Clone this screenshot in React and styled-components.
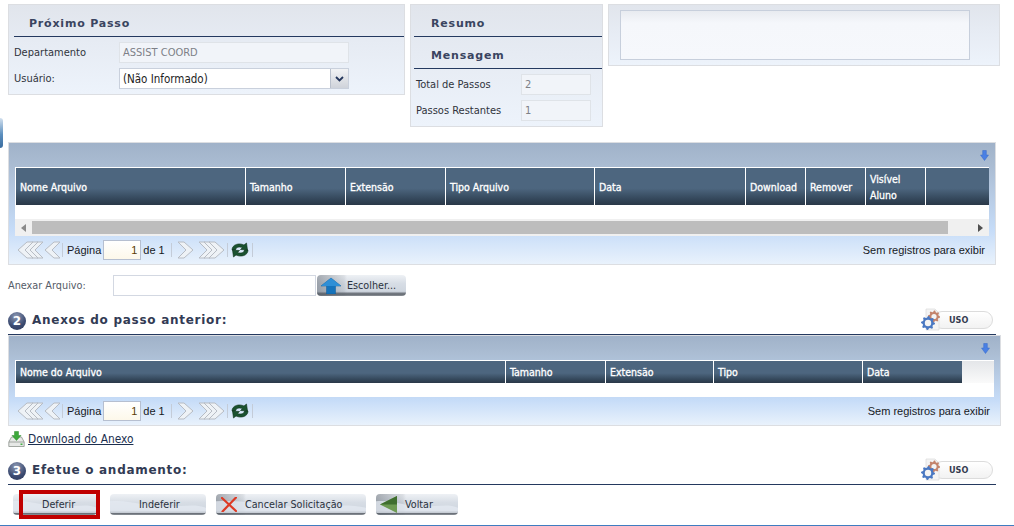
import React from "react";
import styled, { createGlobalStyle } from "styled-components";

const GlobalStyle = createGlobalStyle`
  html, body {
    margin: 0;
    padding: 0;
    background: #ffffff;
    overflow: hidden;
  }
  body {
    font-family: "DejaVu Sans Condensed", "DejaVu Sans", sans-serif;
    font-stretch: condensed;
    font-size: 11px;
    color: #2b2f38;
  }
`;

const FIRST_COLUMNS = [
  { label: "Nome Arquivo", width: 230 },
  { label: "Tamanho", width: 100 },
  { label: "Extensão", width: 100 },
  { label: "Tipo Arquivo", width: 149 },
  { label: "Data", width: 151 },
  { label: "Download", width: 60 },
  { label: "Remover", width: 60 },
  { label: "Visível Aluno", width: 60 },
  { label: "", width: 63 },
];

const SECOND_COLUMNS = [
  { label: "Nome do Arquivo", width: 490 },
  { label: "Tamanho", width: 100 },
  { label: "Extensão", width: 108 },
  { label: "Tipo", width: 149 },
  { label: "Data", width: 99 },
];

// gear outline, used for the USO badge
const gearPoints = (cx, cy, outer, inner, teeth) => {
  const points = [];
  for (let i = 0; i < teeth * 4; i++) {
    const r = i % 4 < 2 ? outer : inner;
    const a = (i / (teeth * 4)) * Math.PI * 2;
    points.push(`${(cx + r * Math.cos(a)).toFixed(2)},${(cy + r * Math.sin(a)).toFixed(2)}`);
  }
  return points.join(" ");
};

const Chevrons = ({ count, left }) => {
  const width = 15 + (count - 1) * 5 + 2;
  return (
    <svg width={width} height="18" viewBox={`0 0 ${width} 18`}>
      {Array.from({ length: count }).map((_, i) => {
        const order = left ? count - 1 - i : i;
        const x = order * 5 + 1;
        const d = left
          ? `M${x + 9} 1 L${x} 9 L${x + 9} 17 L${x + 15} 17 L${x + 7} 9 L${x + 15} 1 Z`
          : `M${x + 6} 1 L${x + 15} 9 L${x + 6} 17 L${x} 17 L${x + 8} 9 L${x} 1 Z`;
        return <path key={i} d={d} fill="#eef2f6" stroke="#b7bcc4" strokeWidth="1" />;
      })}
    </svg>
  );
};

const RefreshIcon = () => (
  <svg width="20" height="18" viewBox="0 0 20 18">
    <path d="M2 9 C2 3.5 9 1.5 14 4 L16.5 2 L17.5 9 L10.5 8.5 L12.5 6.6 C9 5.2 5.8 6.2 5.5 9 Z" fill="#1a5230" stroke="#0d3019" strokeWidth=".6" />
    <path d="M18 9 C18 14.5 11 16.5 6 14 L3.5 16 L2.5 9 L9.5 9.5 L7.5 11.4 C11 12.8 14.2 11.8 14.5 9 Z" fill="#1a5230" stroke="#0d3019" strokeWidth=".6" />
  </svg>
);

const SmallDownArrow = () => (
  <svg width="9" height="11" viewBox="0 0 9 11">
    <path d="M2.7 0.5 H6.3 V5 H8.5 L4.5 10.5 L0.5 5 H2.7 Z" fill="#4a80e4" stroke="#3568c8" strokeWidth=".5" />
  </svg>
);

const UploadIcon = () => (
  <svg width="22" height="17" viewBox="0 0 22 17">
    <path d="M11 1 L21 9 H15.5 V17 H6.5 V9 H1 Z" fill="#1673bb" stroke="#0f5c9a" strokeWidth=".5" />
    <path d="M11 1 L21 9 H1 Z" fill="#2f8fd6" />
  </svg>
);

const DownloadIcon = () => (
  <svg width="17" height="16" viewBox="0 0 17 16">
    <path d="M3.5 6 L0.8 11 V15.5 H16.2 V11 L13.5 6 Z" fill="#e6e8e6" stroke="#8d938d" strokeWidth=".8" />
    <path d="M1 11 H16" stroke="#8d938d" strokeWidth=".8" />
    <path d="M6.5 0.5 H10.5 V4.5 H13 L8.5 9.5 L4 4.5 H6.5 Z" fill="#3da83a" stroke="#2c8a2a" strokeWidth=".5" />
    <rect x="12.5" y="12.5" width="2" height="1.5" fill="#45b045" />
  </svg>
);

const GearIcon = () => (
  <svg width="24" height="24" viewBox="0 0 24 24">
    <path d="M6 1 H15 L19 5 V22 H6 Z" fill="#f4f4f4" stroke="#dadada" strokeWidth=".7" />
    <polygon points={gearPoints(14, 8.5, 6, 4.6, 8)} fill="#c4846c" />
    <circle cx="14" cy="8.5" r="2.6" fill="#f4f4f4" />
    <polygon points={gearPoints(8, 15, 7, 5.4, 8)} fill="#4a78c2" />
    <circle cx="8" cy="15" r="3.2" fill="#f4f4f4" />
  </svg>
);

const CrossIcon = () => (
  <svg width="16" height="15" viewBox="0 0 16 15">
    <path d="M1 1 L15 14 M15 0.5 L1.5 14.5" stroke="#dd3a24" strokeWidth="2.2" strokeLinecap="round" />
  </svg>
);

const BackIcon = () => (
  <svg width="17" height="17" viewBox="0 0 17 17">
    <path d="M0 8.5 L17 0 V17 Z" fill="#6d9a52" />
    <path d="M0 8.5 L17 0 V8.5 Z" fill="#3f6e2e" />
  </svg>
);

const ButtonWave = () => (
  <WaveArt viewBox="0 0 100 20" preserveAspectRatio="none">
    <path d="M0 7 C20 5 35 12 55 12 C75 12 88 9 100 13 V18 H0 Z" fill="#e4eaf1" opacity=".75" />
  </WaveArt>
);

const Pager = ({ message }) => (
  <PagerBar>
    <Chevrons count={3} left />
    <Chevrons count={1} left />
    <PagerSep $left="1px" />
    <PagerText>Página</PagerText>
    <PageBox>1</PageBox>
    <PagerText $after="4px">de 1</PagerText>
    <PagerSep $right="5px" />
    <NextButtons>
      <Chevrons count={1} />
      <Chevrons count={3} />
    </NextButtons>
    <PagerSep />
    <RefreshIcon />
    <PagerSep />
    <PagerInfo>{message}</PagerInfo>
  </PagerBar>
);

const SectionHeading = ({ number, title, $marginTop }) => (
  <SectionRow $marginTop={$marginTop}>
    <NumberBall>{number}</NumberBall>
    <SectionTitle>{title}</SectionTitle>
    <UsoToggle>
      <UsoIcon><GearIcon /></UsoIcon>
      <UsoLabel>USO</UsoLabel>
    </UsoToggle>
  </SectionRow>
);

const App = () => {
  return (
    <Page>
      <GlobalStyle />
      <SideTab />
      <TopRow>
        <NextStepPanel>
          <PanelTitle>Próximo Passo</PanelTitle>
          <FormRows>
            <FormRow>
              <FieldLabel $width="105px">Departamento</FieldLabel>
              <ReadOnlyField $width="230px">ASSIST COORD</ReadOnlyField>
            </FormRow>
            <FormRow>
              <FieldLabel $width="105px">Usuário:</FieldLabel>
              <SelectBox>
                <SelectValue>(Não Informado)</SelectValue>
                <SelectArrow>
                  <svg width="9" height="6" viewBox="0 0 9 6">
                    <path d="M1 1 L4.5 4.5 L8 1" fill="none" stroke="#25375c" strokeWidth="1.8" />
                  </svg>
                </SelectArrow>
              </SelectBox>
            </FormRow>
          </FormRows>
        </NextStepPanel>

        <SummaryPanel>
          <PanelTitle $indent="17px">Resumo</PanelTitle>
          <PanelTitle $indent="17px">Mensagem</PanelTitle>
          <FormRows $indent="2px">
            <FormRow>
              <FieldLabel $width="105px">Total de Passos</FieldLabel>
              <ReadOnlyField $width="70px">2</ReadOnlyField>
            </FormRow>
            <FormRow>
              <FieldLabel $width="105px">Passos Restantes</FieldLabel>
              <ReadOnlyField $width="70px">1</ReadOnlyField>
            </FormRow>
          </FormRows>
        </SummaryPanel>

        <MessagePanel>
          <MessageBox />
        </MessagePanel>
      </TopRow>

      <Grid $width="988px" $marginTop="15px">
        <GridTop><SmallDownArrow /></GridTop>
        <HeaderRow $height="37px">
          {FIRST_COLUMNS.map((col, i) => (
            <HeaderCell key={i} $width={col.width}>{col.label}</HeaderCell>
          ))}
        </HeaderRow>
        <EmptyBody $height="14px" />
        <ScrollTrack>
          <ScrollArrow>
            <svg width="5" height="8" viewBox="0 0 5 8"><path d="M5 0 V8 L0 4 Z" fill="#8a8a8a" /></svg>
          </ScrollArrow>
          <ScrollThumb />
          <ScrollArrow>
            <svg width="5" height="8" viewBox="0 0 5 8"><path d="M0 0 V8 L5 4 Z" fill="#505050" /></svg>
          </ScrollArrow>
        </ScrollTrack>
        <Pager message="Sem registros para exibir" />
      </Grid>

      <AttachRow>
        <AttachLabel>Anexar Arquivo:</AttachLabel>
        <FileInput />
        <ChooseButton $width="89px" $iconArea>
          <UploadIcon />
          <ChooseText>Escolher...</ChooseText>
        </ChooseButton>
      </AttachRow>

      <SectionHeading number="2" title="Anexos do passo anterior:" $marginTop="7px" />

      <Grid $width="993px" $marginTop="0">
        <GridTop $paddingRight="10px"><SmallDownArrow /></GridTop>
        <HeaderRow $height="22px" $right="32px">
          {SECOND_COLUMNS.map((col, i) => (
            <HeaderCell key={i} $width={col.width}>{col.label}</HeaderCell>
          ))}
        </HeaderRow>
        <EmptyBody $height="14px" />
        <Pager message="Sem registros para exibir" />
      </Grid>

      <DownloadLinkRow>
        <DownloadIcon />
        <DownloadLink>Download do Anexo</DownloadLink>
      </DownloadLinkRow>

      <SectionHeading number="3" title="Efetue o andamento:" $marginTop="6px" />

      <ActionRow>
        <MarkedAction>
          <ActionButton $width="84px" $padLeft="29px">
            <ButtonWave />
            <ButtonText>Deferir</ButtonText>
          </ActionButton>
          <RedMark />
        </MarkedAction>
        <ActionButton $width="96px" $padLeft="29px">
          <ButtonWave />
          <ButtonText>Indeferir</ButtonText>
        </ActionButton>
        <ActionButton $width="150px" $padLeft="5px" $iconArea>
          <ButtonWave />
          <CrossIcon />
          <ButtonText $before="8px">Cancelar Solicitação</ButtonText>
        </ActionButton>
        <ActionButton $width="82px" $padLeft="4px" $iconArea>
          <ButtonWave />
          <BackIcon />
          <ButtonText $before="8px">Voltar</ButtonText>
        </ActionButton>
      </ActionRow>
      <BottomLine />
    </Page>
  );
};

const Page = styled.div`
  position: relative;
  width: 1014px;
  height: 526px;
  display: flex;
  flex-direction: column;
  overflow: hidden;
  box-sizing: border-box;
  padding-left: 8px;
`;

const SideTab = styled.div`
  position: absolute;
  left: 0;
  top: 118px;
  width: 3px;
  height: 30px;
  background: linear-gradient(180deg, #d3e0ee, #5c8fbe 55%, #3a6c9f);
  border-radius: 0 3px 3px 0;
`;

const TopRow = styled.div`
  display: flex;
  align-items: flex-start;
  gap: 5px;
  padding-top: 4px;
  height: 123px;
`;

const Panel = styled.div`
  box-sizing: border-box;
  border: 1px solid #dcdee2;
  background: linear-gradient(180deg, #e1e5ec 0%, #e6ebf3 40%, #edf3fb 100%);
`;

const NextStepPanel = styled(Panel)`
  width: 397px;
  height: 91px;
  padding-left: 5px;
`;

const SummaryPanel = styled(Panel)`
  width: 193px;
  height: 123px;
  padding-left: 3px;
`;

const MessagePanel = styled(Panel)`
  width: 392px;
  height: 62px;
  padding: 5px 0 0 11px;
`;

const MessageBox = styled.div`
  box-sizing: border-box;
  width: 350px;
  height: 50px;
  border: 1px solid #c7cfdc;
  background: linear-gradient(180deg, #e8ebf0 0%, #f5f7fb 25%, #f6f8fc 100%);
`;

const PanelTitle = styled.div`
  box-sizing: border-box;
  height: 32px;
  padding: 6px 0 0 ${props => props.$indent || "15px"};
  border-bottom: 1px solid #24395f;
  display: flex;
  align-items: center;
  font-family: "DejaVu Sans", sans-serif;
  font-stretch: normal;
  font-size: 11px;
  font-weight: 700;
  letter-spacing: 0.8px;
  color: #3a4460;
`;

const FormRows = styled.div`
  display: flex;
  flex-direction: column;
  gap: 5px;
  padding: 5px 0 0 ${props => props.$indent || "0"};
`;

const FormRow = styled.div`
  display: flex;
  align-items: center;
  height: 21px;
`;

const FieldLabel = styled.div`
  width: ${props => props.$width};
  font-size: 11px;
  color: #30343c;
  flex-shrink: 0;
  margin-top: -1px;
`;

const ReadOnlyField = styled.div`
  box-sizing: border-box;
  width: ${props => props.$width};
  height: 21px;
  padding: 2px 3px;
  display: flex;
  align-items: center;
  border: 1px solid #dfe3e8;
  background: #f1f4f9;
  color: #7d8087;
  font-size: 11px;
`;

const SelectBox = styled.div`
  box-sizing: border-box;
  width: 230px;
  height: 21px;
  display: flex;
  border: 1px solid #c9d0dc;
  background: #ffffff;
`;

const SelectValue = styled.div`
  flex: 1;
  padding: 0 3px;
  display: flex;
  align-items: center;
  font-size: 11.5px;
  color: #1d1d1d;
`;

const SelectArrow = styled.div`
  width: 17px;
  display: flex;
  align-items: center;
  justify-content: center;
  background: linear-gradient(180deg, #f2f3f5, #cfd3da);
  border-left: 1px solid #b9c0cc;
`;

const Grid = styled.div`
  box-sizing: border-box;
  width: ${props => props.$width};
  margin-top: ${props => props.$marginTop};
  border: 1px solid #dcdee2;
  background: linear-gradient(180deg, #a0b2c9 0%, #aabcd2 18%, #c6dcf8 72%, #e9f2fc 100%);
`;

const GridTop = styled.div`
  height: 24px;
  padding-right: ${props => props.$paddingRight || "6px"};
  padding-top: 7px;
  box-sizing: border-box;
  display: flex;
  justify-content: flex-end;
  align-items: flex-start;
`;

const HeaderRow = styled.div`
  display: flex;
  margin: 0 6px;
  height: ${props => props.$height};
  border-top: 1px solid #ffffff;
  border-left: 1px solid #ffffff;
  padding-right: ${props => props.$right || "0"};
  background: linear-gradient(180deg, #e4e6e9, #fafafa);
`;

const HeaderCell = styled.div`
  box-sizing: border-box;
  width: ${props => props.$width}px;
  flex-shrink: 0;
  padding: 0 4px;
  display: flex;
  align-items: center;
  border-right: 1px solid #ffffff;
  background: linear-gradient(180deg, #4d667f 0%, #4d667f 55%, #334659 85%, #2a3848 100%);
  color: #ffffff;
  font-size: 10.5px;
  -webkit-text-stroke: 0.3px #ffffff;
  line-height: 16px;
  &:last-child {
    border-right: 0;
  }
`;

const EmptyBody = styled.div`
  height: ${props => props.$height};
  margin: 0 6px;
  background: #ffffff;
`;

const ScrollTrack = styled.div`
  height: 17px;
  margin: 0 6px;
  padding: 2px 0;
  box-sizing: border-box;
  display: flex;
  background: #f0f0f0;
`;

const ScrollArrow = styled.div`
  width: 17px;
  display: flex;
  align-items: center;
  justify-content: center;
`;

const ScrollThumb = styled.div`
  flex: 1;
  margin-right: 24px;
  background: #bdbdbd;
`;

const PagerBar = styled.div`
  height: 28px;
  box-sizing: border-box;
  padding: 0 10px 0 8px;
  display: flex;
  align-items: center;
  font-family: "Liberation Sans", Arial, sans-serif;
  font-stretch: normal;
  font-size: 11px;
  color: #17191d;
`;

const NextButtons = styled.div`
  display: flex;
  align-items: center;
  gap: 4px;
`;

const PagerSep = styled.div`
  width: 1px;
  height: 14px;
  margin: 0 ${props => props.$right || "2px"} 0 ${props => props.$left || "2px"};
  background: #c4ccd8;
`;

const PagerText = styled.span`
  font-size: 11px;
  margin: 0 ${props => props.$after || "2px"} 0 2px;
`;

const PageBox = styled.div`
  box-sizing: border-box;
  width: 38px;
  height: 20px;
  padding-right: 3px;
  display: flex;
  align-items: center;
  justify-content: flex-end;
  border: 1px solid #b6bfd0;
  background: linear-gradient(180deg, #ffffff, #fdf8ea);
  color: #5a3d05;
  font-size: 11px;
`;

const PagerInfo = styled.span`
  margin-left: auto;
  font-size: 11px;
`;

const AttachRow = styled.div`
  display: flex;
  align-items: center;
  height: 21px;
  margin-top: 10px;
`;

const AttachLabel = styled.div`
  width: 105px;
  font-size: 10.8px;
  color: #555c68;
`;

const FileInput = styled.div`
  box-sizing: border-box;
  width: 203px;
  height: 21px;
  border: 1px solid #d3d8e2;
  background: #ffffff;
`;

const ButtonBase = styled.div`
  position: relative;
  box-sizing: border-box;
  height: 21px;
  width: ${props => props.$width};
  display: flex;
  align-items: center;
  border-radius: 4px;
  background: linear-gradient(180deg, #eef1f5 0%, #d7dde5 40%, #cfd6df 78%, #5f656d 90%, #8e939a 100%);
  color: #2b3240;
  font-size: 10.7px;
  overflow: hidden;
  &::before {
    content: "";
    display: ${props => (props.$iconArea ? "block" : "none")};
    position: absolute;
    left: 0;
    top: 0;
    bottom: 0;
    width: 30px;
    background: linear-gradient(90deg, rgba(80, 88, 98, 0.45), rgba(80, 88, 98, 0.1) 90%, rgba(80, 88, 98, 0));
  }
  & > svg {
    position: relative;
    flex-shrink: 0;
  }
`;

const WaveArt = styled.svg`
  && {
    position: absolute;
  }
  left: 0;
  top: 0;
  width: 100%;
  height: 100%;
`;

const ChooseButton = styled(ButtonBase)`
  margin-left: 1px;
  padding-left: 3px;
`;

const ChooseText = styled.span`
  margin-left: 5px;
  position: relative;
`;

const SectionRow = styled.div`
  box-sizing: border-box;
  width: 988px;
  display: flex;
  align-items: center;
  gap: 6px;
  height: 32px;
  padding-top: 5px;
  margin-top: ${props => props.$marginTop};
  border-bottom: 1px solid #24395f;
`;

const NumberBall = styled.div`
  width: 18px;
  height: 18px;
  display: flex;
  align-items: center;
  justify-content: center;
  border-radius: 50%;
  background: radial-gradient(circle at 45% 25%, #8d99b4, #3b4a70 60%, #2b3758);
  color: #ffffff;
  font-family: "DejaVu Sans", sans-serif;
  font-stretch: normal;
  font-weight: 700;
  font-size: 12px;
`;

const SectionTitle = styled.div`
  margin-bottom: 3px;
  font-family: "DejaVu Sans", sans-serif;
  font-stretch: normal;
  font-size: 12px;
  font-weight: 700;
  letter-spacing: 0.72px;
  color: #323b54;
`;

const UsoToggle = styled.div`
  position: relative;
  box-sizing: border-box;
  margin: 0 3px 2px auto;
  width: 60px;
  height: 18px;
  padding-left: 15px;
  display: flex;
  align-items: center;
  border: 1px solid #dcdcdc;
  border-radius: 9px;
  background: linear-gradient(180deg, #ffffff, #f2f2f2);
`;

const UsoIcon = styled.div`
  position: absolute;
  left: -14px;
  top: -4px;
`;

const UsoLabel = styled.span`
  font-size: 9px;
  font-weight: 700;
  color: #343b4e;
`;

const DownloadLinkRow = styled.div`
  display: flex;
  align-items: center;
  gap: 3px;
  height: 16px;
  margin-top: 5px;
`;

const DownloadLink = styled.a`
  font-size: 11.8px;
  text-decoration: underline;
  color: #1c2f4f;
`;

const ActionRow = styled.div`
  display: flex;
  gap: 10px;
  padding: 9px 0 0 5px;
`;

const MarkedAction = styled.div`
  position: relative;
  margin-right: 3px;
`;

const RedMark = styled.div`
  position: absolute;
  left: 6px;
  top: -4px;
  width: 81px;
  height: 29px;
  box-sizing: border-box;
  border: 4px solid #c00000;
`;

const ActionButton = styled(ButtonBase)`
  padding-left: ${props => props.$padLeft};
`;

const ButtonText = styled.span`
  position: relative;
  margin-left: ${props => props.$before || "0"};
`;

const BottomLine = styled.div`
  position: absolute;
  left: 0;
  right: 0;
  bottom: 0;
  height: 1px;
  background: #3f7cc0;
`;

export default App;
